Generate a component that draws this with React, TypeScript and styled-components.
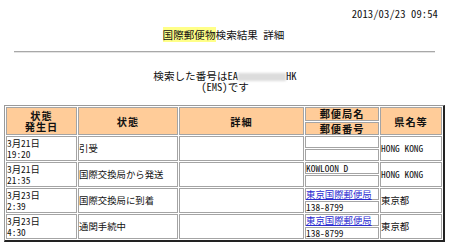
import React from "react";
import styled, { createGlobalStyle } from "styled-components";

const Global = createGlobalStyle`
  html, body { margin: 0; padding: 0; background: #ffffff; }
  body {
    font-family: "Noto Sans Mono CJK JP", "Noto Sans CJK JP", "Liberation Mono", monospace;
    color: #111111;
  }
`;

const Page = styled.div`
  width: 450px;
  height: 242px;
  overflow: hidden;
  display: flex;
  flex-direction: column;
`;

const DateLine = styled.div`
  margin-top: 8px;
  padding-right: 12px;
  text-align: right;
  font-size: 10.6px;
  line-height: 12px;
  letter-spacing: 0.1px;
`;

const Title = styled.div`
  margin-top: 9px;
  text-align: center;
  font-size: 10.6px;
  line-height: 12px;
  padding-right: 3px;
`;

const Mark = styled.span`
  background: #ffff88;
`;

const Rule = styled.div`
  margin: 10px 15px 0 14px;
  height: 0;
  border-top: 1px solid #a8a8a8;
  border-bottom: 1px solid #e4e4e4;
`;

const Search = styled.div`
  margin-top: 17px;
  text-align: center;
  font-size: 10.6px;
  line-height: 11px;
`;

const Blur = styled.span`
  display: inline-block;
  width: 48px;
  height: 8px;
  vertical-align: -1px;
  background: #dcdcdc;
  filter: blur(0.8px);
`;

const Table = styled.table`
  margin: 13px 0 0 4px;
  width: 441px;
  table-layout: fixed;
  border-collapse: separate;
  border-spacing: 1px;
  border-style: solid;
  border-width: 1px 2px 2px 1px;
  border-color: #9a9a9a #222222 #222222 #9a9a9a;
  font-size: 9.4px;
`;

const Cell = styled.td<{ $w?: number; $h?: number; $center?: boolean; $head?: boolean }>`
  box-sizing: border-box;
  padding: 0;
  border: 1px solid #a4a4a4;
  vertical-align: middle;
  white-space: nowrap;
  line-height: ${(p) => (p.$h ? `${p.$h - 2}px` : "11px")};
  ${(p) => (p.$w ? `width: ${p.$w}px;` : "")}
  ${(p) => (p.$h ? `height: ${p.$h}px;` : "")}
  text-align: ${(p) => (p.$center ? "center" : "left")};
  background: ${(p) => (p.$head ? "#ffcc99" : "#ffffff")};
  font-weight: ${(p) => (p.$head ? 700 : 400)};
  font-size: ${(p) => (p.$head ? "10.2px" : "9.4px")};
  letter-spacing: ${(p) => (p.$head ? "1px" : "0")};
`;

const Link = styled.a`
  color: #2a2ad0;
  text-decoration: underline;
  cursor: pointer;
`;

type Row = {
  date: string;
  time: string;
  status: string;
  office: React.ReactNode;
  zip: string;
  area: string;
};

const rows: Row[] = [
  { date: "3月21日", time: "19:20", status: "引受", office: "", zip: "", area: "HONG KONG" },
  { date: "3月21日", time: "21:35", status: "国際交換局から発送", office: "KOWLOON D", zip: "", area: "HONG KONG" },
  { date: "3月23日", time: "2:39", status: "国際交換局に到着", office: <Link>東京国際郵便局</Link>, zip: "138-8799", area: "東京都" },
  { date: "3月23日", time: "4:30", status: "通関手続中", office: <Link>東京国際郵便局</Link>, zip: "138-8799", area: "東京都" },
];

export default function App() {
  return (
    <Page>
      <Global />
      <DateLine>2013/03/23 09:54</DateLine>
      <Title>
        <Mark>国際郵便物</Mark>検索結果 詳細
      </Title>
      <Rule />
      <Search>
        検索した番号はEA<Blur />HK
        <br />
        (EMS)です
      </Search>
      <Table>
        <tbody>
          <tr>
            <Cell $head $center $w={71} rowSpan={2}>
              状態
              <br />
              発生日
            </Cell>
            <Cell $head $center $w={100} rowSpan={2}>状態</Cell>
            <Cell $head $center $w={125} rowSpan={2}>詳細</Cell>
            <Cell $head $center $w={74} $h={14}>郵便局名</Cell>
            <Cell $head $center $w={62} rowSpan={2}>県名等</Cell>
          </tr>
          <tr>
            <Cell $head $center $h={13}>郵便番号</Cell>
          </tr>
          {rows.map((r, i) => (
            <React.Fragment key={i}>
              <tr>
                <Cell rowSpan={2}>
                  {r.date}
                  <br />
                  {r.time}
                </Cell>
                <Cell rowSpan={2}>{r.status}</Cell>
                <Cell rowSpan={2}></Cell>
                <Cell $h={12}>{r.office}</Cell>
                <Cell rowSpan={2}>{r.area}</Cell>
              </tr>
              <tr>
                <Cell $h={12}>{r.zip}</Cell>
              </tr>
            </React.Fragment>
          ))}
        </tbody>
      </Table>
    </Page>
  );
}
